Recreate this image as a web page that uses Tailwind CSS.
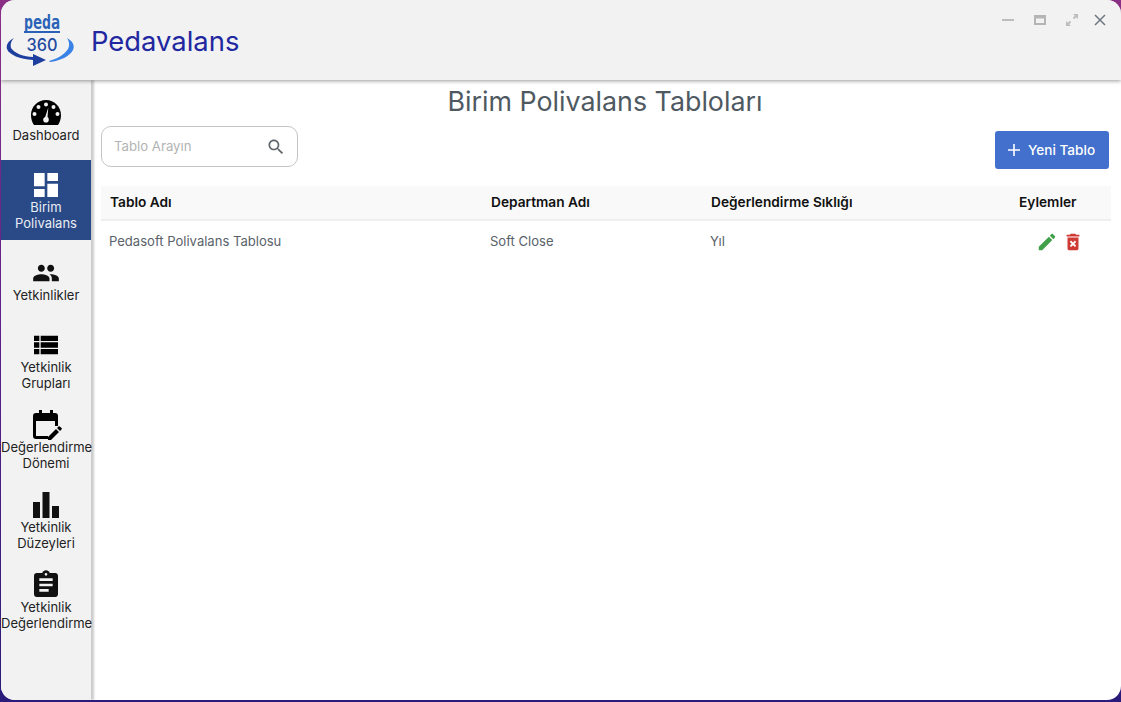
<!DOCTYPE html>
<html lang="en">
<head>
    <meta charset="UTF-8">
    <meta name="viewport" content="width=device-width, initial-scale=1.0">
    <title>Pedavalans</title>
    <script src="https://cdn.jsdelivr.net/npm/@tailwindcss/browser@4"></script>
</head>
<body class="font-['Inter',sans-serif] overflow-hidden">
    <div class="h-[702px] w-[1121px] bg-gradient-to-b from-[#8a2f86] via-[#5a1f8a] to-[#2a1a7a] pl-[1px] pb-[2px]">
        <div class="h-[700px] w-[1120px] bg-white rounded-[14px] overflow-hidden flex flex-col relative">
            <!-- header -->
            <header class="h-[80px] shrink-0 bg-[#f2f2f2] flex items-center relative z-20 shadow-[0_1px_4px_rgba(0,0,0,0.4)]">
                <svg class="ml-[3px] w-[70px] h-[68px]" viewBox="0 0 70 68">
                    <text x="38" y="23" text-anchor="middle" font-family="DejaVu Sans Mono" font-weight="700" font-size="19" fill="#2a62b8" textLength="36" lengthAdjust="spacingAndGlyphs">peda</text>
                    <rect x="20" y="25" width="36" height="2" fill="#2a62b8"/>
                    <text x="38" y="45" text-anchor="middle" font-family="Inter" font-weight="500" font-size="17" fill="#1f4a9f" textLength="31" lengthAdjust="spacingAndGlyphs">360</text>
                    <path d="M10 32C4 35 2 39 3 43C5 49 16 53 29 54L29 60L42 54L29 48L29 51C20 51 10 47 7 42C6 38 7 35 10 32Z" fill="#1f3f9f"/>
                    <path d="M63 32C69 35 71 40 69 44C66 50 56 55 46 56L45 55C53 53 61 48 64 43C66 39 65 35 63 32Z" fill="#3b82e6"/>
                </svg>
                <h1 class="ml-[17px] mt-[3px] text-[27.400px] leading-none text-[#2127a0]">Pedavalans</h1>
                <div class="absolute top-[13px] right-[14px] flex items-center text-[#b4b4b4]">
                    <svg class="w-[14px] h-[14px] mr-[18px]" viewBox="0 0 14 14"><rect x="1" y="6" width="12" height="2" fill="#bdbdbd"/></svg>
                    <svg class="w-[14px] h-[14px] mr-[18px]" viewBox="0 0 14 14"><path d="M1 2h12v10H1z M3 5.500v4.500h8V5.500z" fill="#b5b5b5" fill-rule="evenodd"/></svg>
                    <svg class="w-[14px] h-[14px] mr-[14px]" viewBox="0 0 14 14"><path d="M8 1h5v5l-1.800-1.800-2 2-1.400-1.400 2-2z M1 8l1.800 1.800 2-2 1.400 1.400-2 2L6 13H1z" fill="#bdbdbd"/></svg>
                    <svg class="w-[14px] h-[14px]" viewBox="0 0 14 14"><path d="M2 2l10 10M12 2L2 12" stroke="#6f7780" stroke-width="1.500"/></svg>
                </div>
            </header>

            <div class="flex flex-1 min-h-0">
                <!-- sidebar -->
                <nav class="w-[90px] shrink-0 bg-[#f2f2f2] relative z-10 shadow-[3px_0_2px_rgba(0,0,0,0.2)] text-[13px] leading-[16px] text-[#222] text-center">
                    <a class="h-[80px] pb-[1px] flex flex-col items-center justify-center">
                        <svg class="w-[32px] h-[32px]" viewBox="0 0 32 32"><path fill-rule="evenodd" d="M16 3C7.700 3 1 9.700 1 18c0 4 1.200 7.500 3 10h24c1.800-2.500 3-6 3-10 0-8.300-6.700-15-15-15zM16 5.500a2 2 0 1 1 0 4 2 2 0 0 1 0-4zM8.500 8a2 2 0 1 1 0 4 2 2 0 0 1 0-4zM23.500 8a2 2 0 1 1 0 4 2 2 0 0 1 0-4zM4.500 15a2 2 0 1 1 0 4 2 2 0 0 1 0-4zM27.500 15a2 2 0 1 1 0 4 2 2 0 0 1 0-4zM18.300 10.500l-.8 9.500c1 .7 1.300 1.800 1.300 2.700a2.800 2.800 0 0 1-5.600 0c0-1.200.8-2.300 2-2.700z" fill="#000"/></svg>
                        <span class="-mt-[2px]">Dashboard</span>
                    </a>
                    <a class="h-[80px] pb-[1px] flex flex-col items-center justify-center bg-[#2a4a87] text-[#e8ecf4]">
                        <svg class="w-[32px] h-[32px]" viewBox="0 0 24 24"><path d="M3 13h8V3H3v10zm0 8h8v-6H3v6zm10 0h8V11h-8v10zm0-18v6h8V3h-8z" fill="#fff"/></svg>
                        <span class="-mt-[2px]">Birim<br>Polivalans</span>
                    </a>
                    <a class="h-[80px] pb-[1px] flex flex-col items-center justify-center">
                        <svg class="w-[28px] h-[28px] my-[2px]" viewBox="0 0 24 24"><path d="M16 11c1.660 0 2.990-1.340 2.990-3S17.660 5 16 5s-3 1.340-3 3 1.340 3 3 3zm-8 0c1.660 0 2.990-1.340 2.990-3S9.660 5 8 5 5 6.340 5 8s1.340 3 3 3zm0 2c-2.330 0-7 1.170-7 3.500V19h14v-2.500C15 14.170 10.330 13 8 13zm8 0c-.29 0-.62.02-.97.05 1.160.84 1.970 1.970 1.970 3.450V19h6v-2.500c0-2.330-4.670-3.500-7-3.500z" fill="#111"/></svg>
                        <span class="-mt-[2px]">Yetkinlikler</span>
                    </a>
                    <a class="h-[80px] pb-[1px] flex flex-col items-center justify-center">
                        <svg class="w-[32px] h-[32px]" viewBox="0 0 24 24"><path d="M3 14h4v-4H3v4zm0 5h4v-4H3v4zM3 9h4V5H3v4zm5 5h13v-4H8v4zm0 5h13v-4H8v4zM8 5v4h13V5H8z" fill="#000"/></svg>
                        <span class="-mt-[2px]">Yetkinlik<br>Grupları</span>
                    </a>
                    <a class="h-[80px] pb-[1px] flex flex-col items-center justify-center">
                        <svg class="w-[32px] h-[32px]" viewBox="0 0 32 32"><path d="M9 1h3v3h8V1h3v3h2a3 3 0 0 1 3 3v10h-3v-5H6v15h12v3H6a3 3 0 0 1-3-3V7a3 3 0 0 1 3-3h3z" fill="#000"/><path d="M18 28v3h3l8-8-3-3zM27 19l3 3 1.500-1.500a1 1 0 0 0 0-1.400l-1.600-1.600a1 1 0 0 0-1.400 0z" fill="#000"/></svg>
                        <span class="-mt-[2px] w-[90px] whitespace-nowrap">Değerlendirme<br>Dönemi</span>
                    </a>
                    <a class="h-[80px] pb-[1px] flex flex-col items-center justify-center">
                        <svg class="w-[32px] h-[32px]" viewBox="0 0 32 32"><path d="M3 13h7v16H3zM12.500 3h7v26h-7zM22 17h7v12h-7z" fill="#111"/></svg>
                        <span class="-mt-[2px]">Yetkinlik<br>Düzeyleri</span>
                    </a>
                    <a class="h-[80px] pb-[1px] flex flex-col items-center justify-center">
                        <svg class="w-[32px] h-[32px]" viewBox="0 0 24 24"><path d="M19 3h-4.180C14.400 1.840 13.300 1 12 1s-2.400.84-2.820 2H5c-1.100 0-2 .9-2 2v14c0 1.100.9 2 2 2h14c1.100 0 2-.9 2-2V5c0-1.100-.9-2-2-2zm-7 0c.55 0 1 .45 1 1s-.45 1-1 1-1-.45-1-1 .45-1 1-1zm2 14H7v-2h7v2zm3-4H7v-2h10v2zm0-4H7V7h10v2z" fill="#111"/></svg>
                        <span class="-mt-[2px] w-[90px] whitespace-nowrap">Yetkinlik<br>Değerlendirme</span>
                    </a>
                </nav>

                <!-- main -->
                <main class="flex-1 min-w-0 pl-[10px] pr-[9px]">
                    <h2 class="mt-[5px] pr-[3px] h-[32px] text-center text-[26.800px] leading-[32px] text-[#4f5962]">Birim Polivalans Tabloları</h2>
                    <div class="flex justify-between items-start mt-[9px]">
                        <div class="w-[197px] h-[41px] rounded-[10px] border border-[#c4c4c4] flex items-center pl-[12px] pr-[11px]">
                            <span class="flex-1 text-[13.200px] text-[#b3b3b3]">Tablo Arayın</span>
                            <svg class="w-[20px] h-[20px]" viewBox="0 0 24 24"><path d="M15.500 14h-.79l-.28-.27C15.410 12.590 16 11.110 16 9.500 16 5.910 13.090 3 9.500 3S3 5.910 3 9.500 5.910 16 9.500 16c1.610 0 3.090-.59 4.230-1.570l.27.28v.79l5 4.990L20.490 19l-4.990-5zm-6 0C7.010 14 5 11.990 5 9.500S7.010 5 9.500 5 14 7.010 14 9.500 11.990 14 9.500 14z" fill="#5f666d"/></svg>
                        </div>
                        <button class="mt-[5px] mr-[3px] w-[114px] h-[38px] pl-[12px] rounded-[3px] bg-[#4270cc] text-white text-[13.600px] font-medium flex items-center gap-[7px]">
                            <svg class="w-[14px] h-[14px]" viewBox="0 0 14 14"><path d="M6.200 1h1.600v5.200H13v1.600H7.800V13H6.200V7.800H1V6.200h5.200z" fill="#fff"/></svg>
                            Yeni Tablo
                        </button>
                    </div>
                    <table class="mt-[17px] w-[1010px] table-fixed text-[13.050px] border-collapse">
                        <colgroup>
                            <col class="w-[381px]"><col class="w-[220px]"><col class="w-[262px]"><col>
                        </colgroup>
                        <thead>
                            <tr class="h-[34px] bg-[#f9f9f9] border-b-2 border-[#efefef] text-[13.700px] text-[#111]">
                                <th class="pl-[9px] text-left font-semibold">Tablo Adı</th>
                                <th class="pl-[9px] text-left font-semibold">Departman Adı</th>
                                <th class="pl-[9px] text-left font-semibold">Değerlendirme Sıklığı</th>
                                <th class="text-left font-semibold pl-[55px]">Eylemler</th>
                            </tr>
                        </thead>
                        <tbody>
                            <tr class="h-[43px] text-[#5a626a]">
                                <td class="pl-[8px]">Pedasoft Polivalans Tablosu</td>
                                <td class="pl-[8px]">Soft Close</td>
                                <td class="pl-[8px]">Yıl</td>
                                <td>
                                    <div class="flex items-center pl-[72px] gap-[4px]">
                                        <svg class="w-[22px] h-[22px]" viewBox="0 0 24 24"><path d="M3 17.250V21h3.750L17.810 9.940l-3.750-3.750L3 17.250zM20.710 7.040c.39-.39.39-1.020 0-1.410l-2.340-2.340c-.39-.39-1.020-.39-1.410 0l-1.830 1.830 3.750 3.750 1.830-1.830z" fill="#43a04a"/></svg>
                                        <svg class="w-[22px] h-[22px]" viewBox="0 0 24 24"><path d="M6 19c0 1.100.9 2 2 2h8c1.100 0 2-.9 2-2V7H6v12zm2.460-7.120l1.410-1.410L12 12.590l2.120-2.120 1.410 1.410L13.410 14l2.120 2.120-1.410 1.410L12 15.410l-2.120 2.120-1.410-1.410L10.590 14l-2.130-2.120zM15.500 4l-1-1h-5l-1 1H5v2h14V4z" fill="#cf3a34"/></svg>
                                    </div>
                                </td>
                            </tr>
                        </tbody>
                    </table>
                </main>
            </div>
        </div>
    </div>
</body>
</html>
